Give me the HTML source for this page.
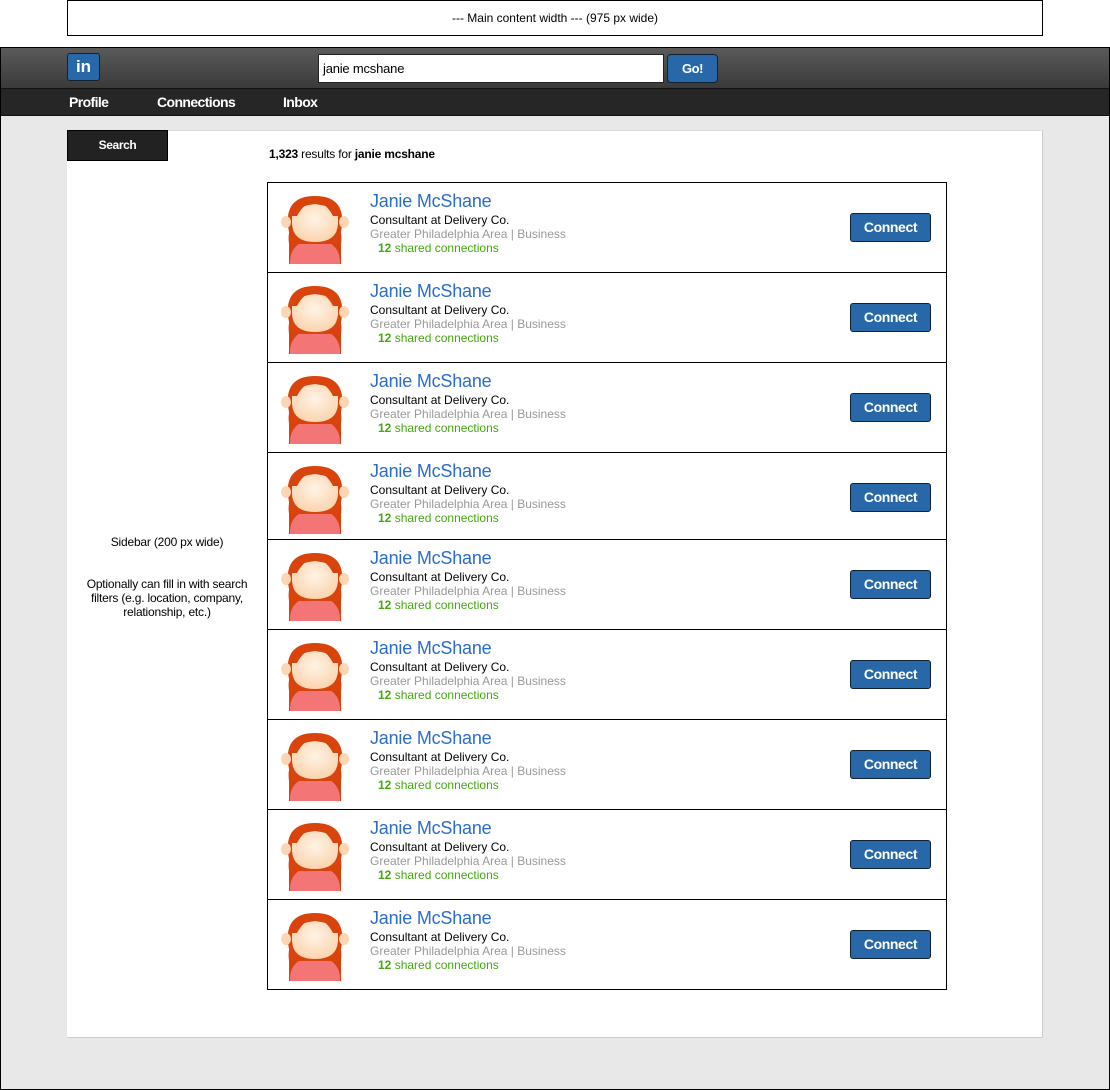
<!DOCTYPE html>
<html><head><style>
*{margin:0;padding:0;box-sizing:border-box}
body{width:1110px;height:1090px;background:#fff;font-family:"Liberation Sans",Arial,sans-serif;position:relative;overflow:hidden}
.abs{position:absolute}
#top{left:67px;top:0;width:976px;height:36px;border:1px solid #000;font-size:12px;text-align:center;line-height:34px}
#frame{left:0;top:47px;width:1110px;height:1043px;border:1px solid #000;background:#e8e8e8}
#hdr{left:1px;top:48px;width:1108px;height:41px;background:linear-gradient(#5a5a5a,#3a3a3a);border-bottom:1px solid #111}
#nav{left:1px;top:89px;width:1108px;height:27px;background:#262626;border-bottom:1px solid #111}
.navi{color:#fff;font-size:14px;font-weight:bold;top:94px;letter-spacing:-.6px}
#logo{left:67px;top:53px;width:33px;height:28px;background:#2868a8;border:1px solid #123;border-radius:3px;color:#fff;font-weight:bold;font-size:17px;text-align:center;line-height:25px}
#q{left:318px;top:54px;width:346px;height:29px;background:#fff;border:1px solid #222;font-size:13px;padding:4px 4px;line-height:19px;letter-spacing:-.2px}
#go{left:667px;top:54px;width:51px;height:29px;background:#2868a8;border:1px solid #123;border-radius:4px;color:#fff;font-weight:bold;font-size:13px;text-align:center;line-height:27px;letter-spacing:-.5px}
#panel{left:67px;top:130px;width:976px;height:908px;background:#fff;border-right:1px solid #ccc;border-bottom:1px solid #ccc;border-top:1px solid #ddd}
#tab{left:67px;top:130px;width:101px;height:31px;background:#222;color:#fff;font-weight:bold;font-size:12px;text-align:center;line-height:29px;border:1px solid #000;letter-spacing:-.4px}
#side{left:77px;top:535px;width:180px;font-size:12px;text-align:center;line-height:14px;letter-spacing:-.2px}
#res{left:269px;top:147px;font-size:12px;letter-spacing:-.2px}
.row{position:absolute;left:267px;width:680px;border:1px solid #000;background:#fff}
.av{position:absolute;left:7px;top:3px}
.nm{position:absolute;left:102px;top:8px;font-size:18px;color:#2a6ccf;letter-spacing:-.2px}
.t1{position:absolute;left:102px;top:30px;font-size:12px;color:#000}
.t2{position:absolute;left:102px;top:44px;font-size:12px;color:#999}
.t3{position:absolute;left:110px;top:58px;font-size:12px;color:#44a80f}
.btn{position:absolute;left:582px;top:30px;width:81px;height:29px;background:#2868a8;border:1px solid #123;border-radius:3px;color:#fff;font-weight:bold;font-size:14px;text-align:center;line-height:27px;letter-spacing:-.4px}
</style></head><body>
<div id="top" class="abs">--- Main content width --- (975 px wide)</div>
<div id="frame" class="abs"></div>
<div id="hdr" class="abs"></div>
<div id="nav" class="abs"></div>
<div id="logo" class="abs">in</div>
<div id="q" class="abs">janie mcshane</div>
<div id="go" class="abs">Go!</div>
<div class="abs navi" style="left:69px">Profile</div>
<div class="abs navi" style="left:157px">Connections</div>
<div class="abs navi" style="left:283px">Inbox</div>
<div id="panel" class="abs"></div>
<div id="tab" class="abs">Search</div>
<div id="side" class="abs">Sidebar (200 px wide)<br><br><br>Optionally can fill in with search filters (e.g. location, company, relationship, etc.)</div>
<div id="res" class="abs"><b>1,323</b> results for <b>janie mcshane</b></div>
<svg width="0" height="0" style="position:absolute"><defs>
<radialGradient id="fg" cx=".5" cy=".4" r=".6"><stop offset="0" stop-color="#fff3e6"/><stop offset="1" stop-color="#fbd4ae"/></radialGradient>
<g id="a">
<path d="M14 58 Q12 42 20 38 L60 38 Q68 42 66 58 L66 78 L14 78 Z" fill="#d8400c"/>
<path d="M15 78 Q14 56 40 52 Q66 56 65 78 Z" fill="#f47575"/>
<path d="M13 40 Q10 10 40 10 Q70 10 67 40 L64 58 L16 58 Z" fill="#d8440c"/>
<ellipse cx="11" cy="36" rx="5" ry="6" fill="#fcd6b2"/>
<ellipse cx="69" cy="36" rx="5" ry="6" fill="#fcd6b2"/>
<path d="M17 26 Q24 20 40 18 Q56 20 63 26 L63 38 Q62 56 40 56 Q18 56 17 38 Z" fill="url(#fg)"/>
<path d="M15 30 Q18 12 40 14 Q28 18 22 30 Z M65 30 Q62 12 40 14 Q52 18 58 30 Z" fill="#d8440c"/>
</g></defs></svg>
<div class="row" style="top:182px;height:91px"><svg class="av" width="80" height="80"><use href="#a"/></svg><div class="nm">Janie McShane</div><div class="t1">Consultant at Delivery Co.</div><div class="t2">Greater Philadelphia Area | Business</div><div class="t3"><b>12</b> shared connections</div><div class="btn">Connect</div></div>
<div class="row" style="top:272px;height:91px"><svg class="av" width="80" height="80"><use href="#a"/></svg><div class="nm">Janie McShane</div><div class="t1">Consultant at Delivery Co.</div><div class="t2">Greater Philadelphia Area | Business</div><div class="t3"><b>12</b> shared connections</div><div class="btn">Connect</div></div>
<div class="row" style="top:362px;height:91px"><svg class="av" width="80" height="80"><use href="#a"/></svg><div class="nm">Janie McShane</div><div class="t1">Consultant at Delivery Co.</div><div class="t2">Greater Philadelphia Area | Business</div><div class="t3"><b>12</b> shared connections</div><div class="btn">Connect</div></div>
<div class="row" style="top:452px;height:88px"><svg class="av" width="80" height="80"><use href="#a"/></svg><div class="nm">Janie McShane</div><div class="t1">Consultant at Delivery Co.</div><div class="t2">Greater Philadelphia Area | Business</div><div class="t3"><b>12</b> shared connections</div><div class="btn">Connect</div></div>
<div class="row" style="top:539px;height:91px"><svg class="av" width="80" height="80"><use href="#a"/></svg><div class="nm">Janie McShane</div><div class="t1">Consultant at Delivery Co.</div><div class="t2">Greater Philadelphia Area | Business</div><div class="t3"><b>12</b> shared connections</div><div class="btn">Connect</div></div>
<div class="row" style="top:629px;height:91px"><svg class="av" width="80" height="80"><use href="#a"/></svg><div class="nm">Janie McShane</div><div class="t1">Consultant at Delivery Co.</div><div class="t2">Greater Philadelphia Area | Business</div><div class="t3"><b>12</b> shared connections</div><div class="btn">Connect</div></div>
<div class="row" style="top:719px;height:91px"><svg class="av" width="80" height="80"><use href="#a"/></svg><div class="nm">Janie McShane</div><div class="t1">Consultant at Delivery Co.</div><div class="t2">Greater Philadelphia Area | Business</div><div class="t3"><b>12</b> shared connections</div><div class="btn">Connect</div></div>
<div class="row" style="top:809px;height:91px"><svg class="av" width="80" height="80"><use href="#a"/></svg><div class="nm">Janie McShane</div><div class="t1">Consultant at Delivery Co.</div><div class="t2">Greater Philadelphia Area | Business</div><div class="t3"><b>12</b> shared connections</div><div class="btn">Connect</div></div>
<div class="row" style="top:899px;height:91px"><svg class="av" width="80" height="80"><use href="#a"/></svg><div class="nm">Janie McShane</div><div class="t1">Consultant at Delivery Co.</div><div class="t2">Greater Philadelphia Area | Business</div><div class="t3"><b>12</b> shared connections</div><div class="btn">Connect</div></div>
</body></html>
